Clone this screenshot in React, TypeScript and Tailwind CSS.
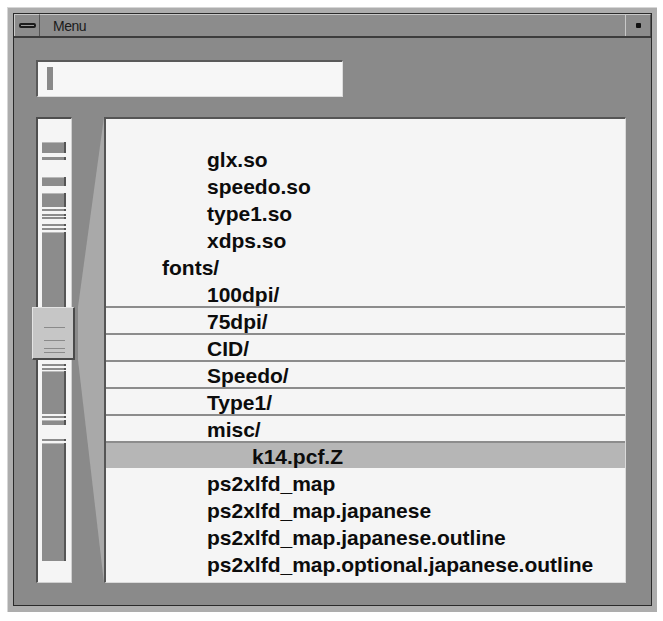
import React from 'react';

interface Row {
  label: string;
  level: number;
  sep?: boolean;
  selected?: boolean;
}

const rows: Row[] = [
  { label: 'glx.so', level: 1 },
  { label: 'speedo.so', level: 1 },
  { label: 'type1.so', level: 1 },
  { label: 'xdps.so', level: 1 },
  { label: 'fonts/', level: 0 },
  { label: '100dpi/', level: 1 },
  { label: '75dpi/', level: 1, sep: true },
  { label: 'CID/', level: 1, sep: true },
  { label: 'Speedo/', level: 1, sep: true },
  { label: 'Type1/', level: 1, sep: true },
  { label: 'misc/', level: 1, sep: true },
  { label: 'k14.pcf.Z', level: 2, sep: true, selected: true },
  { label: 'ps2xlfd_map', level: 1 },
  { label: 'ps2xlfd_map.japanese', level: 1 },
  { label: 'ps2xlfd_map.japanese.outline', level: 1 },
  { label: 'ps2xlfd_map.optional.japanese.outline', level: 1 },
];

const indent = ['pl-[56px]', 'pl-[101px]', 'pl-[146px]'];

// minimap blocks in the scroll column: [top, height]
const blocks: [number, number][] = [
  [23, 11],
  [38, 3],
  [58, 9],
  [74, 14],
  [90, 2],
  [95, 2],
  [98, 2],
  [105, 2],
  [109, 2],
  [113, 77],
  [245, 2],
  [249, 2],
  [252, 43],
  [297, 2],
  [301, 5],
  [320, 2],
  [324, 118],
];

const MiniMap: React.FC = () => (
  <svg width="24" height="462" className="block">
    {blocks.map(([y, h], i) => (
      <g key={i}>
        <rect x="0" y={y} width="24" height={h} fill="#8c8c8c" />
        <rect x="22" y={y} width="2" height={h} fill="#555555" />
        {h > 4 && <rect x="0" y={y} width="22" height="1" fill="#b8b8b8" />}
      </g>
    ))}
  </svg>
);

const App: React.FC = () => {
  return (
    <div className="w-[663px] h-[621px] bg-white pt-[7px] pl-[7px] font-['Liberation_Sans',Arial,sans-serif]">
      {/* Window frame */}
      <div className="w-[650px] h-[605px] bg-[#adadad] border-t border-l border-[#d6d6d6] pt-[5px] pl-[5px] pr-[5px] pb-[6px] flex">
        <div className="flex-1 flex flex-col border border-[#2a2a2a] bg-[#8a8a8a]">
          {/* Title bar */}
          <div className="h-[24px] flex border-b-2 border-[#3c3c3c] bg-[#8c8c8c]">
            <div className="w-[26px] h-full border-t border-l border-[#c8c8c8] border-r border-r-[#555] flex items-center justify-center">
              <div className="w-[17px] h-[5px] rounded-[2px] border-2 border-[#1c1c1c] bg-[#9a9a9a]" />
            </div>
            <div className="flex-1 border-t border-[#c8c8c8] flex items-center pl-[13px] text-[14px] tracking-[-0.5px] text-[#1a1a1a] leading-none">
              Menu
            </div>
            <div className="w-[26px] h-full border-t border-l border-[#c8c8c8] border-r border-r-[#555] flex items-center justify-center">
              <div className="w-[5px] h-[5px] bg-[#111] rounded-[1px]" />
            </div>
          </div>

          {/* Body */}
          <div className="flex-1 pl-[22px] pt-[22px]">
            {/* Text field */}
            <div className="w-[307px] h-[37px] bg-[#f7f7f7] border-t-2 border-l-2 border-[#5a5a5a] border-b border-r border-b-[#dcdcdc] border-r-[#dcdcdc] pl-[9px] pt-[5px]">
              <div className="w-[6px] h-[23px] bg-[#8a8a8a]" />
            </div>

            {/* Main area */}
            <div className="relative flex mt-[20px]">
              {/* Scroll map */}
              <div className="w-[36px] h-[466px] bg-[#f5f5f5] border-t-2 border-l-2 border-[#4e4e4e] border-r border-b border-r-[#d0d0d0] border-b-[#d0d0d0] pl-[4px]">
                <MiniMap />
              </div>

              {/* Zoom wedge */}
              <svg width="32" height="466" className="block">
                <polygon points="32,0 32,466 6,243 6,190" fill="#a9a9a9" />
              </svg>

              {/* List */}
              <div className="w-[522px] h-[466px] bg-[#f5f5f5] border-t-2 border-l-2 border-[#555] border-r border-b border-r-[#dadada] border-b-[#dadada] pt-[25px] overflow-hidden">
                {rows.map((r) => (
                  <div
                    key={r.label}
                    className={`h-[27px] leading-[24px] text-[21px] font-bold text-[#0c0c0c] whitespace-nowrap ${indent[r.level]} ${
                      r.sep ? 'border-t-2 border-[#8c8c8c] pt-[2px]' : 'pt-[4px]'
                    } ${r.selected ? 'bg-[#b6b6b6]' : ''}`}
                  >
                    {r.label}
                  </div>
                ))}
              </div>

              {/* Thumb */}
              <div className="absolute left-[-4px] top-[190px] w-[43px] h-[53px] bg-[#c6c6c6] border-t border-l border-[#e4e4e4] border-r-2 border-b-2 border-r-[#4a4a4a] border-b-[#4a4a4a]">
                <div className="absolute left-[11px] top-[19px] w-[21px] h-px bg-[#8a8a8a]" />
                <div className="absolute left-[11px] top-[32px] w-[21px] h-px bg-[#8a8a8a]" />
                <div className="absolute left-[11px] top-[40px] w-[21px] h-px bg-[#8a8a8a]" />
                <div className="absolute left-[11px] top-[44px] w-[21px] h-px bg-[#8a8a8a]" />
              </div>
            </div>
          </div>
        </div>
      </div>
    </div>
  );
};

export default App;
